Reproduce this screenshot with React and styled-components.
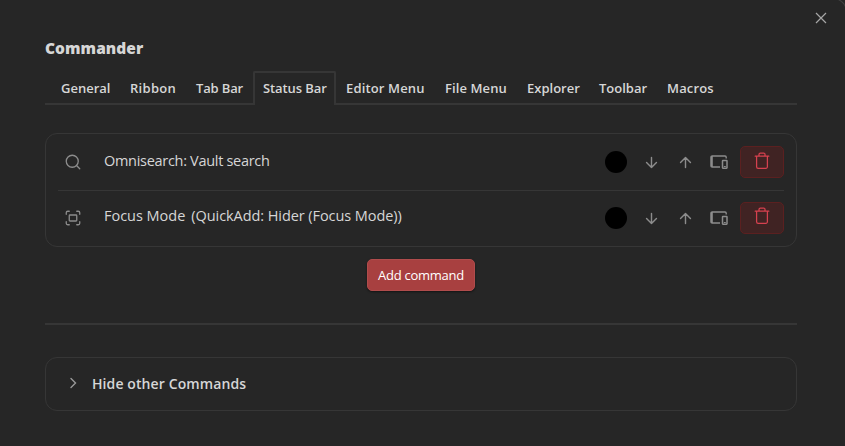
import React from "react";
import styled, { createGlobalStyle } from "styled-components";

const Global = createGlobalStyle`
  * { box-sizing: border-box; }
  body { margin: 0; background: #262626; }
`;

const Modal = styled.main`
  position: relative;
  width: 845px;
  height: 446px;
  padding: 37px 48px 0 45px;
  background: #262626;
  color: #d6d6d6;
  font-family: "Open Sans", "Noto Sans", sans-serif;
  overflow: hidden;
  &::after {
    content: "";
    position: absolute;
    top: -2px;
    right: -2px;
    width: 14px;
    height: 14px;
    border: solid #414141;
    border-width: 1px 1px 0 0;
    border-top-right-radius: 14px;
  }
`;

const CloseButton = styled.button`
  position: absolute;
  top: 12px;
  right: 18px;
  width: 12px;
  height: 12px;
  padding: 0;
  border: 0;
  background: none;
  color: #a6a6a6;
  svg { display: block; }
`;

const Title = styled.h1`
  margin: 0;
  height: 22px;
  font-size: 15.5px;
  line-height: 22px;
  font-weight: 800;
  letter-spacing: ${(p) => p.$spacing}px;
`;

const TabBar = styled.nav`
  display: flex;
  height: 34px;
  margin-top: 12px;
  padding-left: 6px;
  box-shadow: inset 0 -2px #363636;
`;

const Tab = styled.div`
  width: ${(p) => p.$width}px;
  height: 34px;
  padding: ${(p) => (p.$active ? "5px 0 0 8px" : "7px 0 0 10px")};
  border: solid #363636;
  border-width: ${(p) => (p.$active ? "2px 2px 0" : "0")};
  border-radius: 2px 2px 0 0;
  background: ${(p) => (p.$active ? "#262626" : "none")};
  font-size: 13px;
  line-height: 20px;
  font-weight: 600;
  letter-spacing: ${(p) => p.$spacing}px;
  white-space: nowrap;
`;

const Panel = styled.section`
  height: 114px;
  margin-top: 28px;
  padding: 0 12px;
  border: 1px solid #363636;
  border-radius: 12px;
`;

const CommandRow = styled.div`
  display: flex;
  align-items: center;
  height: 56px;
  color: #8c8c8c;
  & + & {
    padding-bottom: 1px;
    border-top: 1px solid #363636;
  }
`;

const RowIcon = styled.span`
  display: flex;
  width: 46px;
  padding-left: 6px;
`;

const Name = styled.div`
  flex: 1;
  display: flex;
  gap: 6px;
  padding-bottom: ${(p) => p.$lift}px;
  color: #d6d6d6;
  font-size: 14.5px;
  line-height: 20px;
  white-space: nowrap;
`;

const NamePart = styled.span`
  letter-spacing: ${(p) => p.$spacing}px;
`;

const Swatch = styled.span`
  width: 22px;
  height: 22px;
  margin-right: 7px;
  border-radius: 50%;
  background: #000;
`;

const Action = styled.span`
  display: flex;
  justify-content: center;
  width: 34px;
  margin-right: ${(p) => p.$after || 0}px;
  svg { display: block; }
`;

const DeleteButton = styled.button`
  display: flex;
  justify-content: center;
  width: 44px;
  height: 32px;
  padding: ${(p) => p.$top}px 0 0;
  border: 1px solid #5b2020;
  border-radius: 5px;
  background: #402323;
  color: #d6414f;
`;

const AddButton = styled.button`
  display: block;
  width: 108px;
  height: 32px;
  margin: 12px 0 0 322px;
  padding: 0;
  border: 1px solid #b04c4c;
  border-radius: 5px;
  background: #a84040;
  box-shadow: 0 1px 2px rgba(0, 0, 0, 0.5);
  color: #fff;
  font: 400 13px/20px "Open Sans", "Noto Sans", sans-serif;
  letter-spacing: ${(p) => p.$spacing}px;
`;

const Divider = styled.hr`
  height: 2px;
  margin: 32px 0;
  border: 0;
  background: #363636;
`;

const Accordion = styled.section`
  display: flex;
  align-items: center;
  height: 54px;
  padding-left: 23px;
  border: 1px solid #363636;
  border-radius: 12px;
  color: #999;
`;

const Chevron = styled.svg`
  width: 8px;
  height: 12px;
  margin-bottom: 3px;
`;

const AccordionTitle = styled.h2`
  margin: 0 0 0 15px;
  color: #d6d6d6;
  font-size: 14px;
  line-height: 20px;
  font-weight: 600;
  letter-spacing: ${(p) => p.$spacing}px;
`;

const Icon = ({ size = 18, stroke = 1.75, children }) => (
  <svg width={size} height={size} viewBox="0 0 24 24" fill="none" stroke="currentColor"
    strokeWidth={stroke} strokeLinecap="round" strokeLinejoin="round">{children}</svg>
);

const SearchIcon = () => (
  <Icon><circle cx="11" cy="11" r="8" /><path d="m21 21-4.3-4.3" /></Icon>
);
const FocusIcon = () => (
  <Icon>
    <path d="M3 7V5a2 2 0 0 1 2-2h2M17 3h2a2 2 0 0 1 2 2v2M21 17v2a2 2 0 0 1-2 2h-2M7 21H5a2 2 0 0 1-2-2v-2" />
    <rect x="7" y="8" width="10" height="8" rx="1" />
  </Icon>
);
const DownIcon = () => <Icon size={17} stroke={2}><path d="M12 5v14M19 12l-7 7-7-7" /></Icon>;
const UpIcon = () => <Icon size={17} stroke={2}><path d="M12 19V5M5 12l7-7 7 7" /></Icon>;
const DevicesIcon = () => (
  <svg width="18" height="14" viewBox="0 0 18 14" fill="none" stroke="currentColor">
    <path d="M16.2 3.6V2.2A1.2 1.2 0 0 0 15 1H2.2A1.2 1.2 0 0 0 1 2.2v8.6A1.2 1.2 0 0 0 2.2 12H10" strokeWidth="1.4" />
    <path d="M1.8 1v11" strokeWidth="2" />
    <rect x="12.5" y="5.5" width="4.5" height="7.7" rx=".4" strokeWidth="1.5" />
    <path d="M13.8 11.5h2" />
  </svg>
);
const TrashIcon = () => (
  <svg width="16" height="18" viewBox="0 0 16 18" fill="none" stroke="currentColor" strokeWidth="1.25"
    strokeLinecap="round" strokeLinejoin="round">
    <path d="M1.2 4.2h13.6M2.6 4.2v10.6a1.6 1.6 0 0 0 1.6 1.6h7.6a1.6 1.6 0 0 0 1.6-1.6V4.2M5 4V2.4A1.4 1.4 0 0 1 6.4 1h3.2A1.4 1.4 0 0 1 11 2.4V4" />
  </svg>
);

const tabs = [
  ["General", 69, 0], ["Ribbon", 66, 0.3], ["Tab Bar", 67, -0.15],
  ["Status Bar", 83, -0.1], ["Editor Menu", 99, 0.15], ["File Menu", 82, 0.1],
  ["Explorer", 72, 0], ["Toolbar", 68, 0], ["Macros", 67, 0.15],
];

const commands = [
  { parts: [["Omnisearch: Vault search", -0.3]], icon: <SearchIcon />, lift: 2, iconTop: 5 },
  {
    parts: [["Focus Mode", -0.02], ["(QuickAdd: Hider (Focus Mode))", -0.07]],
    icon: <FocusIcon />, lift: 4, iconTop: 4,
  },
];

export default function App() {
  return (
    <>
      <Global />
      <Modal>
        <CloseButton aria-label="Close">
          <svg width="12" height="12" viewBox="0 0 12 12" stroke="currentColor" strokeWidth="1.2">
            <path d="m1 1 10 10M11 1 1 11" />
          </svg>
        </CloseButton>
        <Title $spacing={0.05}>Commander</Title>
        <TabBar>
          {tabs.map(([label, width, spacing]) => (
            <Tab key={label} $width={width} $spacing={spacing} $active={label === "Status Bar"}>{label}</Tab>
          ))}
        </TabBar>
        <Panel>
          {commands.map((c) => (
            <CommandRow key={c.parts[0][0]}>
              <RowIcon>{c.icon}</RowIcon>
              <Name $lift={c.lift}>
                {c.parts.map(([text, spacing]) => (
                  <NamePart key={text} $spacing={spacing}>{text}</NamePart>
                ))}
              </Name>
              <Swatch />
              <Action><DownIcon /></Action>
              <Action><UpIcon /></Action>
              <Action $after={4}><DevicesIcon /></Action>
              <DeleteButton aria-label="Delete" $top={c.iconTop}><TrashIcon /></DeleteButton>
            </CommandRow>
          ))}
        </Panel>
        <AddButton $spacing={-0.25}>Add command</AddButton>
        <Divider />
        <Accordion>
          <Chevron viewBox="0 0 8 12" fill="none" stroke="currentColor" strokeWidth="1.4" strokeLinecap="round">
            <path d="m2 1.5 4.5 4.5L2 10.5" />
          </Chevron>
          <AccordionTitle $spacing={0.1}>Hide other Commands</AccordionTitle>
        </Accordion>
      </Modal>
    </>
  );
}
